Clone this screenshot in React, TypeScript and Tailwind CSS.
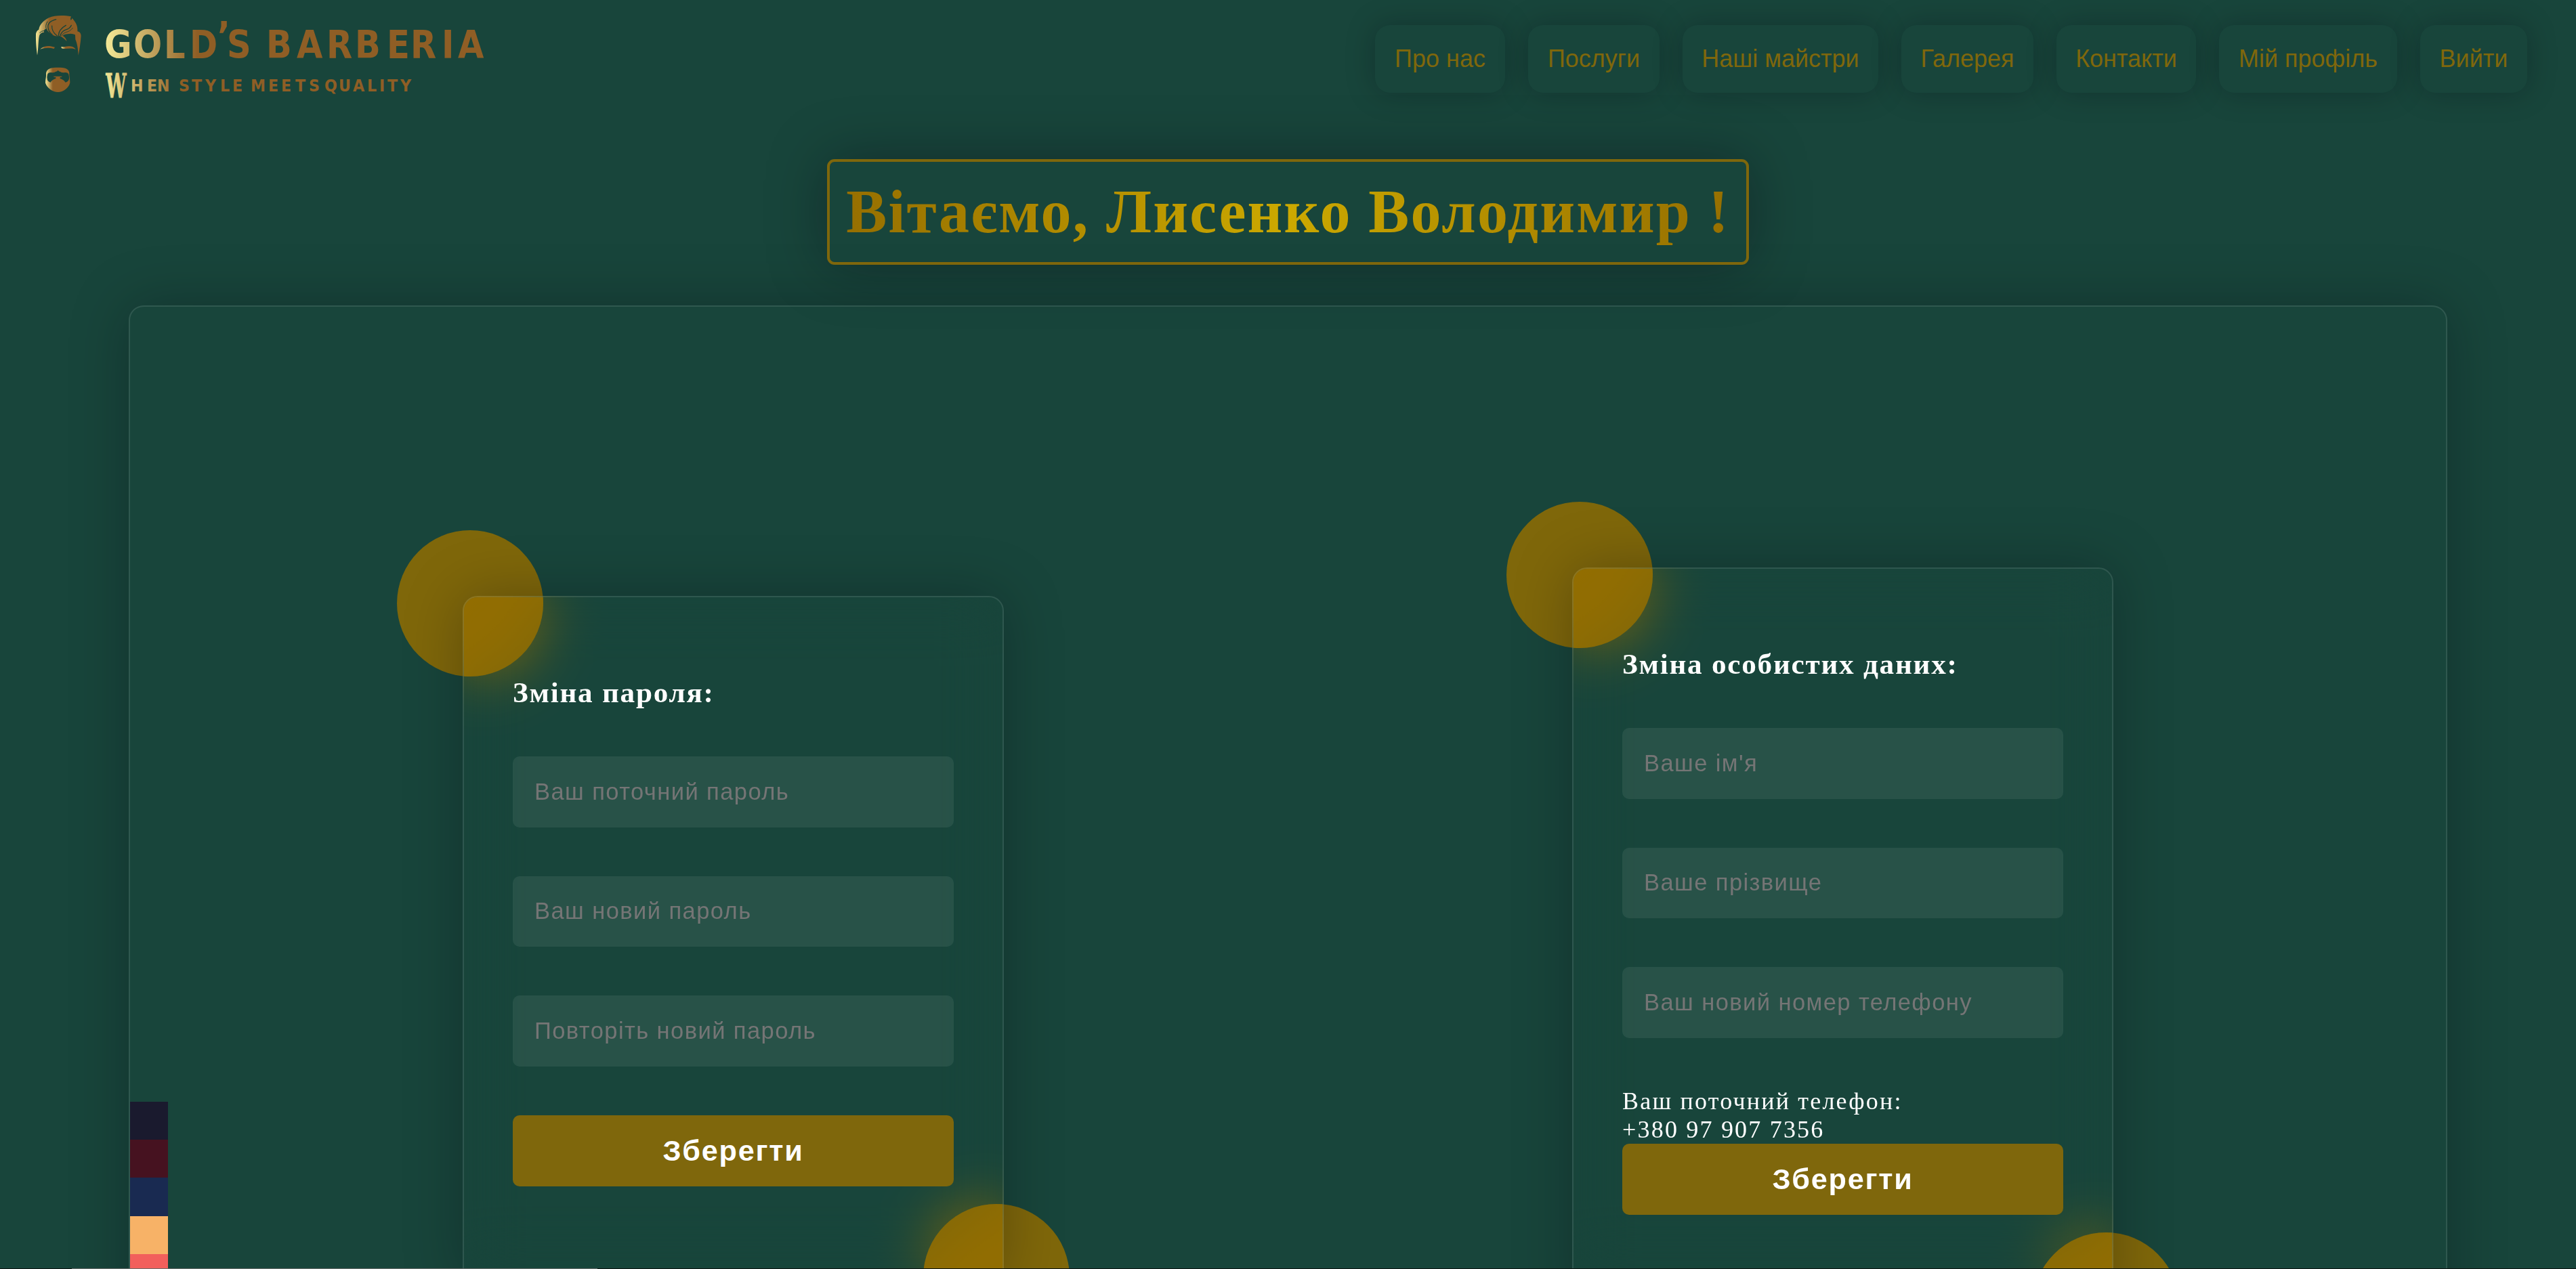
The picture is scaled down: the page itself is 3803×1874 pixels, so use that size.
import React from "react";

const NAV = [
  { label: "Про нас", width: "w-[192px]" },
  { label: "Послуги", width: "w-[194px]" },
  { label: "Наші майстри", width: "w-[289px]" },
  { label: "Галерея", width: "w-[195px]" },
  { label: "Контакти", width: "w-[206px]" },
  { label: "Мій профіль", width: "w-[263px]" },
  { label: "Вийти", width: "w-[158px]" },
];

const PALETTE = ["bg-[#1a1a2e]", "bg-[#461220]", "bg-[#192a51]", "bg-[#f7b267]", "bg-[#f25f5c]"];

const scaled = (xs: number[], k: number) => xs.map((x) => (x / k).toFixed(1)).join(" ");

function Logo() {
  return (
    <svg viewBox="0 0 760 172" className="h-[172px] w-[760px] shrink-0 self-start" role="img" aria-label="Gold's Barberia">
      <defs>
        <linearGradient id="title" gradientUnits="userSpaceOnUse" x1="180" x2="335" y1="0" y2="0">
          <stop offset="0" stopColor="#f3e896" />
          <stop offset="1" stopColor="#8f5e25" />
        </linearGradient>
        <linearGradient id="sub" gradientUnits="userSpaceOnUse" x1="180" x2="306" y1="0" y2="0">
          <stop offset="0" stopColor="#f3e896" />
          <stop offset="1" stopColor="#8f5e25" />
        </linearGradient>
        <linearGradient id="w" gradientUnits="userSpaceOnUse" x1="280" x2="480" y1="0" y2="0">
          <stop offset="0" stopColor="#f3e896" />
          <stop offset="1" stopColor="#8f5e25" />
        </linearGradient>
        <linearGradient id="face" x1="0" x2="1" y1="0" y2="0">
          <stop offset="0" stopColor="#f3e896" />
          <stop offset="0.3" stopColor="#8f5e25" />
        </linearGradient>
      </defs>
      <g transform="translate(40 10) scale(.3333)">
        <path
          fill="url(#face)"
          d="M45 215C42 190 38 160 39 120Q41 106 52 101C54 82 70 62 96 49C122 37 162 37 195 43Q190 53 193 59Q199 57 199 50C210 62 226 80 223 109Q238 112 239 128C237 160 232 190 227 215C226 185 221 160 214 145L213 124Q198 116 179 121Q164 122 158 129Q170 134 176 153Q166 142 152 133Q140 126 136 131Q122 131 108 122Q92 112 88 100L80 98Q73 104 75 113Q62 113 55 125C49 145 51 180 45 215Z"
        />
        <g fill="none" stroke="#18453b" strokeLinecap="round">
          <path strokeWidth="4" d="M128 56Q88 66 93 94Q96 112 111 123" />
          <path strokeWidth="3" d="M90 66Q78 84 86 101" />
          <path strokeWidth="3.5" d="M110 84Q108 110 134 130" />
          <path strokeWidth="4" d="M172 82Q140 100 139 128" />
          <path strokeWidth="4" d="M196 82Q190 98 168 103Q152 110 147 128" />
          <path strokeWidth="2.5" d="M202 94Q190 110 171 113Q158 118 153 128" />
          <path strokeWidth="3" d="M56 115Q64 106 77 106" />
        </g>
        <path fill="url(#face)" d="M58 188C72 174 92 172 104 175L123 179L119 186C98 180 78 182 58 188Z" />
        <path fill="url(#face)" d="M151 177L164 178C184 172 207 174 215 189C196 181 178 187 160 186L153 184Z" />
        <path
          fill="url(#face)"
          d="M84 295C86 273 108 269 137 269C165 269 187 273 187 295C186 305 190 315 190 337C184 361 160 378 137 378C113 378 88 361 81 337C81 320 86 309 84 295Z"
        />
        <path
          fill="#18453b"
          d="M90 301Q92 291 106 291Q119 293 126 288Q134 286 137 281Q140 286 147 288Q154 293 168 291Q182 291 184 300Q189 319 183 327Q178 333 170 335Q165 326 154 321L146 318L146 312L154 311L154 308L118 308L118 311L127 312L127 318L119 321Q109 326 103 335Q93 332 90 325Q86 314 90 301Z"
        />
      </g>
      <text
        transform="scale(.87 1)"
        y="86"
        x={scaled([154, 197, 242, 280, 321, 335, 375, 393, 438, 482, 524, 571, 606, 652, 676], 0.87)}
        fill="url(#title)"
        className="font-['DejaVu_Sans'] text-[57px] font-bold"
      >
        GOLD<tspan dy="-13">’</tspan><tspan dy="13">S</tspan> BARBERIA
      </text>
      <text
        transform="scale(.55 1)"
        y="144"
        x="284"
        fill="url(#w)"
        stroke="url(#w)"
        strokeWidth="1"
        className="font-['DejaVu_Serif'] text-[49px] font-bold"
      >
        W
      </text>
      <text
        transform="scale(.87 1)"
        y="135.5"
        x={scaled(
          [193, 217, 232, 255, 264, 283, 303, 325, 343, 362, 370, 396, 415, 436, 456, 472, 479, 500, 521, 542, 560, 572, 591],
          0.87,
        )}
        fill="url(#sub)"
        className="font-['DejaVu_Sans'] text-[25.5px] font-bold"
      >
        HEN STYLE MEETS QUALITY
      </text>
    </svg>
  );
}

function Circles() {
  return (
    <>
      <div className="absolute -top-[97px] -left-[97px] size-[216px] rounded-full bg-[#966f00]/82" />
      <div className="absolute -right-[97px] -bottom-[97px] size-[216px] rounded-full bg-[#966f00]/82" />
    </>
  );
}

function Card({ title, fields, height, children }: { title: string; fields: string[]; height: string; children?: React.ReactNode }) {
  return (
    <div className={`relative w-[799px] shrink-0 ${height}`}>
      <Circles />
      <form className="relative h-full overflow-hidden rounded-[22px] border-2 border-white/10 shadow-[0_0_86px_rgba(8,7,16,0.27)] backdrop-blur-[43px]">
        <div className="absolute -inset-[2px]">
          <Circles />
        </div>
        <div className="relative flex flex-col px-[72px] pt-[116px]">
          <h3 className="h-[50px] font-['Liberation_Serif'] text-[43.2px] leading-[50px] font-bold tracking-[1.75px] text-white">
            {title}
          </h3>
          <div className="mt-[69px] flex flex-col gap-[72px]">
            {fields.map((f) => (
              <input
                key={f}
                placeholder={f}
                className="h-[104.5px] w-full rounded-[10px] bg-white/7 px-[32px] font-['Liberation_Sans'] text-[34.56px] tracking-[1.4px] placeholder:text-[#757575]"
              />
            ))}
          </div>
          <div className="pt-[72px]">{children}</div>
          <button className="h-[105px] w-full rounded-[10px] bg-[#7f670c] font-['Liberation_Sans'] text-[43.2px] font-bold tracking-[1.8px] text-white">
            Зберегти
          </button>
        </div>
      </form>
    </div>
  );
}

export default function App() {
  return (
    <div className="relative h-[1874px] w-full overflow-hidden bg-[#18453b]">
      <header className="flex h-[174px] items-center justify-between pr-[72px]">
        <Logo />
        <nav className="flex gap-[34px]">
          {NAV.map((n) => (
            <a
              key={n.label}
              className={`flex h-[100px] items-center justify-center rounded-[22px] bg-[#18453b] font-['Liberation_Sans'] text-[36px] whitespace-nowrap text-[#7f670c] shadow-[0_0_43px_rgba(8,7,16,0.25)] ${n.width}`}
            >
              {n.label}
            </a>
          ))}
        </nav>
      </header>

      <div className="mt-[61px] flex justify-center">
        <div className="flex h-[156px] w-[1361px] items-center justify-center rounded-[11px] border-4 border-[#7f670c] shadow-[0_0_86px_rgba(8,7,16,0.35)]">
          <h1 className="bg-linear-to-r from-[#966f00] via-[#cca900] to-[#966f00] bg-clip-text font-['Liberation_Serif'] text-[90px] leading-[140px] font-bold tracking-[2.16px] whitespace-nowrap text-transparent">
            Вітаємо, Лисенко Володимир !
          </h1>
        </div>
      </div>

      <main className="mx-auto mt-[60px] flex h-[1875px] w-[3423px] rounded-[22px] border-2 border-white/10 bg-[#18453b] shadow-[0_0_86px_rgba(8,7,16,0.27)]">
        <aside className="mt-[1174px] w-14 shrink-0">
          {PALETTE.map((c) => (
            <div key={c} className={`h-[56.2px] ${c}`} />
          ))}
        </aside>
        <div className="flex flex-1 items-center justify-center gap-[839px] pr-14">
          <Card title="Зміна пароля:" height="h-[1017px]" fields={["Ваш поточний пароль", "Ваш новий пароль", "Повторіть новий пароль"]} />
          <Card title="Зміна особистих даних:" height="h-[1101px]" fields={["Ваше ім'я", "Ваше прізвище", "Ваш новий номер телефону"]}>
            <p className="h-[84px] font-['Liberation_Serif'] text-[36px] leading-[42px] tracking-[2.2px] text-white">
              Ваш поточний телефон:
              <br />
              +380 97 907 7356
            </p>
          </Card>
        </div>
      </main>

      <div className="absolute inset-x-0 bottom-0 h-px bg-[#0b1512]">
        <div className="ml-[106px] h-px w-[776px] bg-[#6b6f6d]" />
      </div>
    </div>
  );
}
